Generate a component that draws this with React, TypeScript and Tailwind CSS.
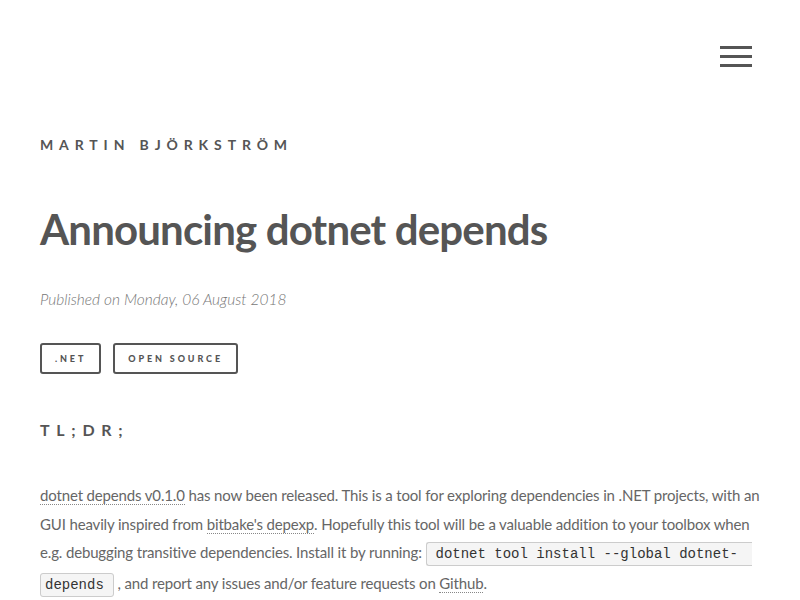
import React from "react";

function Tag({ label }: { label: string }) {
  return (
    <a className="inline-flex h-[31px] items-center rounded-[3px] border-2 border-[#555] px-[13px] text-[9px] font-black tracking-[0.32em] text-[#555] uppercase">
      {label}
    </a>
  );
}

function Link({ children }: { children: React.ReactNode }) {
  return <a className="border-b border-dotted border-[#888] text-[#666]">{children}</a>;
}

export default function App() {
  return (
    <div className="min-h-[600px] bg-white font-['Lato','Open_Sans',sans-serif] text-[#555]">
      <div className="flex justify-end px-[48px] pt-[46px]">
        <button className="flex w-[32px] flex-col gap-[6px]">
          <span className="h-[3px] w-full bg-[#555]" />
          <span className="h-[3px] w-full bg-[#555]" />
          <span className="h-[3px] w-full bg-[#555]" />
        </button>
      </div>

      <div className="px-[40px] pt-[71px]">
        <div className="text-[14px] font-bold tracking-[0.42em] leading-none">MARTIN BJÖRKSTRÖM</div>

        <h1 className="mt-[56px] text-[42px] font-bold leading-none tracking-[-0.02em]">Announcing dotnet depends</h1>

        <p className="mt-[38px] text-[15.5px] font-light italic text-[#777]">Published on Monday, 06 August 2018</p>

        <div className="mt-[32px] flex gap-[12px]">
          <Tag label=".NET" />
          <Tag label="Open Source" />
        </div>

        <h3 className="mt-[48px] text-[16px] font-bold tracking-[0.42em] leading-none">TL;DR;</h3>

        <p className="mt-[43px] max-w-[724px] text-[15px] leading-[28.5px] tracking-[-0.01em] text-[#666]">
          <Link>dotnet depends v0.1.0</Link> has now been released. This is a tool for exploring dependencies in .NET projects, with an GUI heavily inspired from <Link>bitbake's depexp</Link>. Hopefully this tool will be a valuable addition to your toolbox when e.g. debugging transitive dependencies. Install it by running:{" "}
          <code className="rounded-l-[3px] border border-r-0 border-[#ccc] bg-[#f5f5f5] py-[3px] pr-[14px] pl-[9px] font-['Liberation_Mono',monospace] text-[14px] tracking-normal text-[#333]">dotnet tool install --global dotnet-</code>
          <br />
          <code className="rounded-[3px] border border-[#ccc] bg-[#f5f5f5] py-[3px] pr-[9px] pl-[4px] font-['Liberation_Mono',monospace] text-[14px] tracking-normal text-[#333]">depends</code>{" "}
          , and report any issues and/or feature requests on <Link>Github</Link>.
        </p>
      </div>
    </div>
  );
}
